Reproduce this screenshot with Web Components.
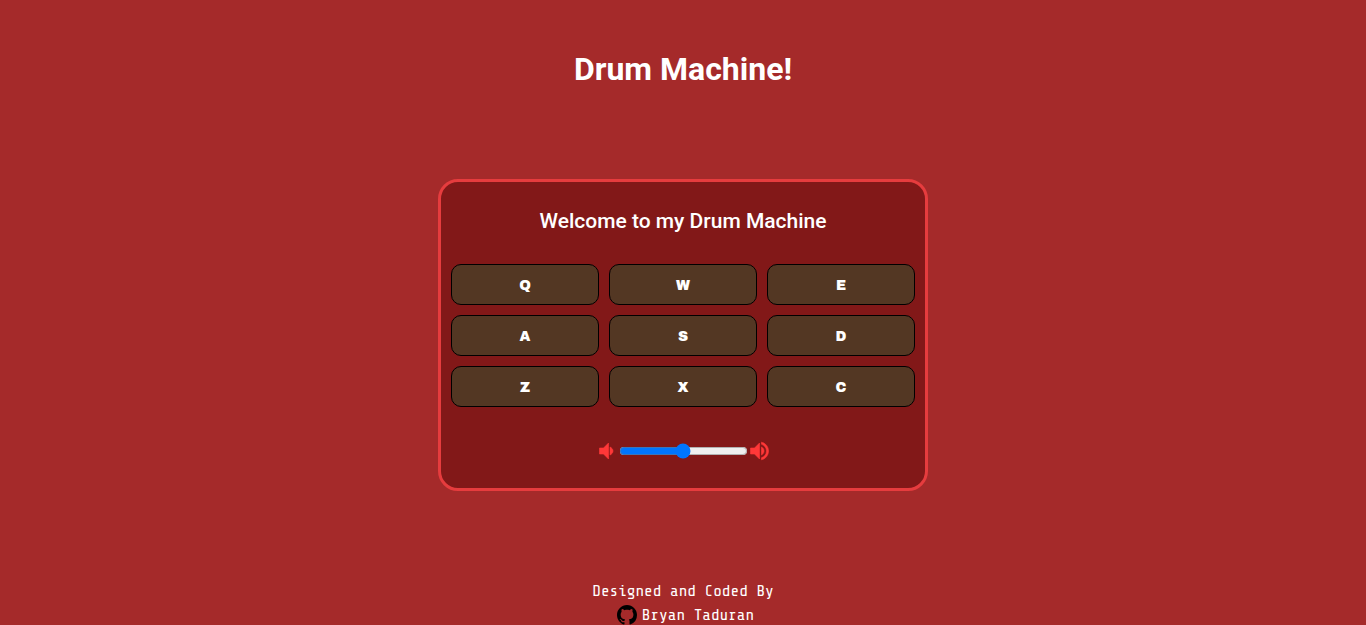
<!DOCTYPE html>
<html lang="en">
<head>
<meta charset="utf-8">
<meta name="viewport" content="width=device-width, initial-scale=1">
<title>Drum Machine</title>
<style>
  body { margin: 0; background: #a52a2a; color: #fff; font-family: Roboto, sans-serif; }
</style>
</head>
<body>
<drum-app></drum-app>

<template id="app-template">
  <style>
    :host { display: flex; flex-direction: column; align-items: center; }
    h1 { margin: 48px 0 89px; font-size: 32px; line-height: 42px; font-weight: 700; text-align: center; }
    drum-machine { width: 100%; max-width: 490px; }
    site-credit { margin-top: 88px; }
  </style>
  <h1>Drum Machine!</h1>
  <drum-machine>Welcome to my Drum Machine</drum-machine>
  <site-credit>Bryan Taduran</site-credit>
</template>

<template id="machine-template">
  <style>
    :host { display: block; box-sizing: border-box; padding: 10px; border: 3px solid #e63c3e; border-radius: 20px; background: #821818; }
    h2 { margin: 16px 0 30px; font-size: 21px; line-height: 26px; font-weight: 500; text-align: center; }
    .pads { display: grid; grid-template-columns: repeat(3, 1fr); gap: 10px; }
    volume-slider { margin: 34px 0 17px; }
  </style>
  <h2><slot></slot></h2>
  <div class="pads">
    <drum-pad>Q</drum-pad><drum-pad>W</drum-pad><drum-pad>E</drum-pad>
    <drum-pad>A</drum-pad><drum-pad>S</drum-pad><drum-pad>D</drum-pad>
    <drum-pad>Z</drum-pad><drum-pad>X</drum-pad><drum-pad>C</drum-pad>
  </div>
  <volume-slider></volume-slider>
</template>

<template id="pad-template">
  <style>
    :host { display: block; }
    button { display: block; box-sizing: border-box; width: 100%; height: 41px; margin: 0; padding: 2px 0 0; border: 1px solid #000; border-radius: 10px; background: #533723; color: #fff; font: 400 14px/20px "Archivo Black", Inter, sans-serif; cursor: pointer; }
    button:active { background: #6b4930; }
  </style>
  <button type="button"><slot></slot></button>
</template>

<template id="volume-template">
  <style>
    :host { display: flex; justify-content: center; align-items: center; height: 20px; }
    svg { display: block; width: 24px; height: 24px; fill: #ff3838; stroke: #ff3838; stroke-width: .6; }
    input { width: 129px; height: 16px; margin: 0; accent-color: #0075ff; }
  </style>
  <svg viewBox="0 0 24 24" aria-hidden="true"><path d="M4.500 9v6h4l5 5V4l-5 5h-4zm10.500-1v8c1.800-.8 3-2.300 3-4s-1.200-3.200-3-4z"/></svg>
  <input type="range" min="0" max="100" value="50" aria-label="Volume">
  <svg viewBox="0 0 24 24" aria-hidden="true"><path d="M2.500 9v6h4l5 5V4l-5 5h-4zm11-1v8c1.500-.700 2.500-2.300 2.500-4s-1-3.300-2.500-4zM13.500 3.200v2.100c2.900.9 5 3.500 5 6.700s-2.100 5.800-5 6.700v2.100c4-.9 7-4.500 7-8.800s-3-7.900-7-8.800z"/></svg>
</template>

<template id="credit-template">
  <style>
    :host { display: block; font: 400 16px/24px "Share Tech Mono", "DejaVu Sans Mono", monospace; text-align: center; }
    p { margin: 0; }
    a { display: flex; justify-content: center; align-items: center; gap: 5px; padding-left: 5px; color: inherit; text-decoration: none; }
    svg { display: block; width: 20px; height: 20px; fill: #000; }
  </style>
  <p>Designed and Coded By</p>
  <a href="https://github.com/">
    <svg viewBox="0 0 16 16" aria-hidden="true"><path d="M8 0C3.580 0 0 3.580 0 8c0 3.540 2.290 6.530 5.470 7.590.4.070.55-.17.55-.38 0-.19-.01-.82-.01-1.490-2.010.37-2.530-.49-2.690-.94-.09-.23-.48-.94-.82-1.130-.28-.15-.68-.52-.01-.53.63-.01 1.080.58 1.230.82.72 1.210 1.870.87 2.330.66.07-.52.28-.87.51-1.070-1.780-.2-3.640-.89-3.640-3.950 0-.87.31-1.590.82-2.150-.08-.2-.36-1.020.08-2.120 0 0 .67-.21 2.200.82.64-.18 1.320-.27 2-.27s1.360.09 2 .27c1.530-1.040 2.200-.82 2.200-.82.44 1.100.16 1.920.08 2.120.51.56.82 1.270.82 2.150 0 3.070-1.870 3.750-3.650 3.950.29.25.54.73.54 1.480 0 1.070-.01 1.930-.01 2.200 0 .21.15.46.55.38A8.010 8.010 0 0 0 16 8c0-4.420-3.580-8-8-8z"/></svg>
    <slot></slot>
  </a>
</template>

<script>
  class TemplateElement extends HTMLElement {
    constructor() {
      super();
      const template = document.getElementById(this.constructor.template);
      this.attachShadow({ mode: "open" }).append(template.content.cloneNode(true));
    }
  }
  class DrumPad extends TemplateElement { static template = "pad-template"; }
  class VolumeSlider extends TemplateElement { static template = "volume-template"; }
  class SiteCredit extends TemplateElement { static template = "credit-template"; }
  class DrumMachine extends TemplateElement { static template = "machine-template"; }
  class DrumApp extends TemplateElement { static template = "app-template"; }
  customElements.define("drum-pad", DrumPad);
  customElements.define("volume-slider", VolumeSlider);
  customElements.define("site-credit", SiteCredit);
  customElements.define("drum-machine", DrumMachine);
  customElements.define("drum-app", DrumApp);
</script>
</body>
</html>
